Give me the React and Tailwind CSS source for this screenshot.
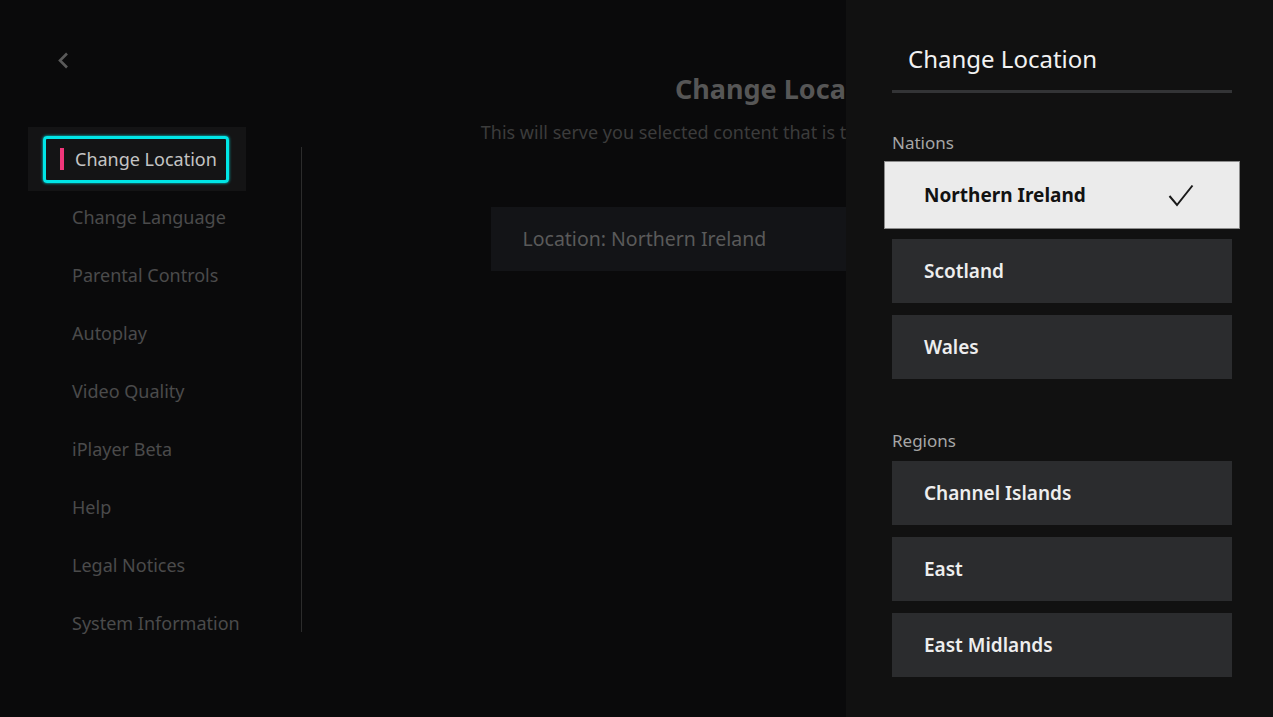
import React from "react";

const navItems = [
  "Change Language",
  "Parental Controls",
  "Autoplay",
  "Video Quality",
  "iPlayer Beta",
  "Help",
  "Legal Notices",
  "System Information",
];

const nations = ["Northern Ireland", "Scotland", "Wales"];
const regions = ["Channel Islands", "East", "East Midlands"];

const App = () => {
  return (
    <div
      className="relative w-full h-[717px] overflow-hidden bg-[#0a0a0b] flex flex-row"
      style={{ fontFamily: '"Noto Sans", "Open Sans", sans-serif' }}
    >
      {/* Sidebar */}
      <div className="w-[302px] shrink-0 flex flex-col">
        <div className="pt-[52px] pl-[57px] h-[130px]">
          <svg width="13" height="17" viewBox="0 0 13 17" fill="none">
            <path d="M10 1.5 L3 8.5 L10 15.5" stroke="#5a5a5a" strokeWidth="2.6" />
          </svg>
        </div>
        <div className="flex flex-row">
          <div className="w-[301px] flex flex-col">
            <div className="h-[58px] flex items-center">
              <div className="ml-[28px] w-[218px] h-[64px] bg-[#141415] flex items-center pl-[15px]">
                <div className="w-[186px] h-[47px] rounded-[4px] border-[3px] border-[#00e6e6] flex items-center pl-[14px] shadow-[0_0_3px_#00e6e6]">
                  <div className="w-[4px] h-[22px] bg-[#f0367a]" />
                  <span className="ml-[11px] text-[18px] text-[#c4c4c4] whitespace-nowrap">Change Location</span>
                </div>
              </div>
            </div>
            {navItems.map((item) => (
              <div key={item} className="h-[58px] flex items-center pl-[72px] text-[18px] text-[#4b4b4b]">
                {item}
              </div>
            ))}
          </div>
          <div className="w-px bg-[#2c2c2c] mt-[17px] mb-[20px]" />
        </div>
      </div>

      {/* Main content, partly covered by the panel */}
      <div className="w-[544px] shrink-0 overflow-hidden">
        <div className="w-[971px] flex flex-col items-center pt-[72px]">
          <h1 className="text-[27px] font-bold text-[#565656] leading-[34px]">Change Location</h1>
          <p className="mt-[14px] text-[18px] text-[#3c3c3c] leading-[24px] whitespace-nowrap">
            This will serve you selected content that is tailored to your area in the UK
          </p>
          <div className="mt-[63px] w-[594px] h-[64px] bg-[#131417] flex items-center pl-[32px] text-[19.5px] text-[#5a5a5a]">
            Location: Northern Ireland
          </div>
        </div>
      </div>

      {/* Overlay panel */}
      <div className="absolute top-0 right-0 h-full w-[427px] bg-[#111111] pl-[46px] pr-[41px] flex flex-col">
        <div className="pt-[44px] pl-[16px] text-[24px] text-[#f2f2f2] leading-[30px]">Change Location</div>
        <div className="mt-[16px] h-[3px] bg-[#333436]" />
        <div className="mt-[40px] text-[17px] text-[#a6a6a6] leading-[20px]">Nations</div>
        <div className="mt-[8px] flex flex-col gap-[12px]">
          {nations.map((n, i) =>
            i === 0 ? (
              <div
                key={n}
                className="-mx-[8px] -mb-[2px] h-[68px] bg-[#ebebeb] border border-[#8c8c8c] flex items-center justify-between pl-[39px] pr-[45px]"
              >
                <span className="text-[19px] font-bold text-[#121212]">{n}</span>
                <svg width="26" height="23" viewBox="0 0 26 23" fill="none">
                  <path d="M1.5 12 L9 21 L24.5 1.5" stroke="#1a1a1a" strokeWidth="2" />
                </svg>
              </div>
            ) : (
              <div key={n} className="h-[64px] bg-[#2b2c2e] flex items-center pl-[32px] text-[19px] font-semibold text-[#eeeeee]">
                {n}
              </div>
            )
          )}
        </div>
        <div className="mt-[52px] text-[17px] text-[#a6a6a6] leading-[20px]">Regions</div>
        <div className="mt-[10px] flex flex-col gap-[12px]">
          {regions.map((r) => (
            <div key={r} className="h-[64px] bg-[#2b2c2e] flex items-center pl-[32px] text-[19px] font-semibold text-[#eeeeee]">
              {r}
            </div>
          ))}
        </div>
      </div>
    </div>
  );
};

export default App;
